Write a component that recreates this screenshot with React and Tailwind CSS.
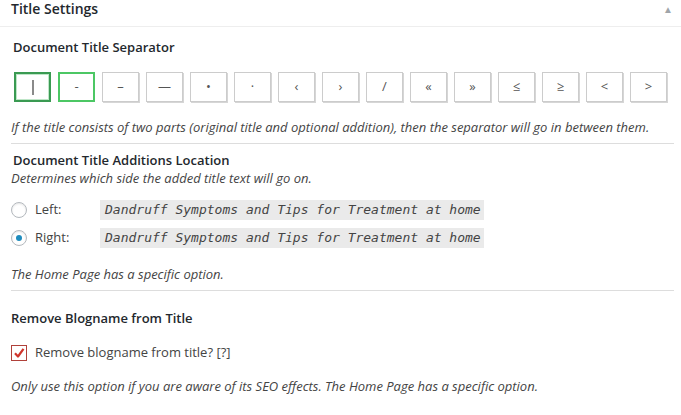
import * as React from "react"

const seps = ["|", "-", "–", "—", "•", "·", "‹", "›", "/", "«", "»", "≤", "≥", "<", ">"]
const sample = "Dandruff Symptoms and Tips for Treatment at home"

function SepButton({ ch, i }) {
  const base = "w-[37px] h-[30px] flex items-center justify-center text-[13px] text-[#555] bg-white"
  const look =
    i === 0
      ? "border-2 border-[#3a9a52] shadow-[inset_0_0_0_1px_#bfe6c8]"
      : i === 1
      ? "border-2 border-[#4cc764]"
      : "border border-[#ccc] shadow-[1px_1px_0_#d6d6d6]"
  return (
    <div className={`${base} ${look}`}>
      {i === 0 ? <span className="w-[2px] h-[15px] bg-[#8a8a8a]" /> : ch}
    </div>
  )
}

function RadioRow({ label, checked }) {
  return (
    <div className="flex items-center h-[24px]">
      <span className="w-[16px] h-[16px] rounded-full border border-[#b4b9be] bg-white shadow-[inset_0_1px_2px_rgba(0,0,0,0.1)] flex items-center justify-center">
        {checked && <span className="w-[6px] h-[6px] rounded-full bg-[#1e8cbe]" />}
      </span>
      <span className="ml-[8px] w-[65px] text-[13px] text-[#444]">{label}</span>
      <code
        className="bg-[#eaeaea] h-[20px] pl-[5px] pr-[3px] flex items-center italic text-[13px] text-[#444] whitespace-nowrap"
        style={{ fontFamily: '"DejaVu Sans Mono", "Liberation Mono", monospace' }}
      >
        {sample}
      </code>
    </div>
  )
}

export default function App() {
  return (
    <div
      className="w-[681px] h-[415px] bg-white overflow-hidden text-[#444]"
      style={{ fontFamily: '"Open Sans", "Noto Sans", sans-serif' }}
    >
      {/* panel header */}
      <div className="h-[27px] border-b border-[#eee] px-[11px] flex justify-between">
        <span className="text-[14px] leading-[18px] font-semibold text-[#23282d]">Title Settings</span>
        <span className="text-[10px] leading-[18px] text-[#a0a5aa] -mr-[3px]">▲</span>
      </div>

      <div className="pl-[11px] pr-[7px]">
        <div className="mt-[10px] ml-[2px] text-[13px] leading-[20px] font-semibold text-[#23282d]">
          Document Title Separator
        </div>
        <div className="mt-[15px] ml-[3px] flex gap-[7px]">
          {seps.map((ch, i) => (
            <SepButton key={i} ch={ch} i={i} />
          ))}
        </div>
        <p className="mt-[15px] text-[13px] leading-[20px] italic">
          If the title consists of two parts (original title and optional addition), then the separator will go in between them.
        </p>
        <hr className="mt-[6px] border-[#ddd]" />

        <div className="mt-[7px] ml-[2px] text-[13px] leading-[18px] font-semibold text-[#23282d]">
          Document Title Additions Location
        </div>
        <p className="text-[13px] leading-[18px] italic">Determines which side the added title text will go on.</p>

        <div className="mt-[11px] flex flex-col gap-[4px]">
          <RadioRow label="Left:" />
          <RadioRow label="Right:" checked />
        </div>
        <p className="mt-[14px] text-[13px] leading-[20px] italic">The Home Page has a specific option.</p>
        <hr className="mt-[6px] border-[#ddd]" />

        <div className="mt-[17px] text-[13px] leading-[20px] font-semibold text-[#23282d]">
          Remove Blogname from Title
        </div>
        <div className="mt-[15px] flex items-center h-[20px]">
          <span className="w-[16px] h-[16px] border border-[#b0413a] bg-white flex items-center justify-center">
            <svg width="12" height="12" viewBox="0 0 12 12">
              <path d="M2 6.2 L5 9.5 L10.5 1.8" fill="none" stroke="#d0342c" strokeWidth="2.2" strokeLinejoin="round" />
            </svg>
          </span>
          <span className="ml-[8px] text-[13px]">Remove blogname from title? [?]</span>
        </div>
        <p className="mt-[13px] text-[13px] leading-[20px] italic">
          Only use this option if you are aware of its SEO effects. The Home Page has a specific option.
        </p>
      </div>
    </div>
  )
}
